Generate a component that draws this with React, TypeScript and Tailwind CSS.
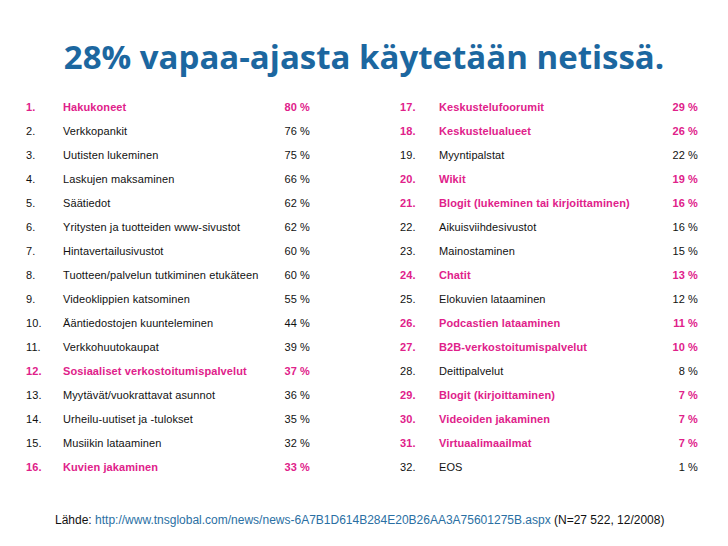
import React from 'react';

type Row = { n: string; label: string; pct: string; hi?: boolean };

const left: Row[] = [
  { n: '1.', label: 'Hakukoneet', pct: '80 %', hi: true },
  { n: '2.', label: 'Verkkopankit', pct: '76 %' },
  { n: '3.', label: 'Uutisten lukeminen', pct: '75 %' },
  { n: '4.', label: 'Laskujen maksaminen', pct: '66 %' },
  { n: '5.', label: 'Säätiedot', pct: '62 %' },
  { n: '6.', label: 'Yritysten ja tuotteiden www-sivustot', pct: '62 %' },
  { n: '7.', label: 'Hintavertailusivustot', pct: '60 %' },
  { n: '8.', label: 'Tuotteen/palvelun tutkiminen etukäteen', pct: '60 %' },
  { n: '9.', label: 'Videoklippien katsominen', pct: '55 %' },
  { n: '10.', label: 'Ääntiedostojen kuunteleminen', pct: '44 %' },
  { n: '11.', label: 'Verkkohuutokaupat', pct: '39 %' },
  { n: '12.', label: 'Sosiaaliset verkostoitumispalvelut', pct: '37 %', hi: true },
  { n: '13.', label: 'Myytävät/vuokrattavat asunnot', pct: '36 %' },
  { n: '14.', label: 'Urheilu-uutiset ja -tulokset', pct: '35 %' },
  { n: '15.', label: 'Musiikin lataaminen', pct: '32 %' },
  { n: '16.', label: 'Kuvien jakaminen', pct: '33 %', hi: true },
];

const right: Row[] = [
  { n: '17.', label: 'Keskustelufoorumit', pct: '29 %', hi: true },
  { n: '18.', label: 'Keskustelualueet', pct: '26 %', hi: true },
  { n: '19.', label: 'Myyntipalstat', pct: '22 %' },
  { n: '20.', label: 'Wikit', pct: '19 %', hi: true },
  { n: '21.', label: 'Blogit (lukeminen tai kirjoittaminen)', pct: '16 %', hi: true },
  { n: '22.', label: 'Aikuisviihdesivustot', pct: '16 %' },
  { n: '23.', label: 'Mainostaminen', pct: '15 %' },
  { n: '24.', label: 'Chatit', pct: '13 %', hi: true },
  { n: '25.', label: 'Elokuvien lataaminen', pct: '12 %' },
  { n: '26.', label: 'Podcastien lataaminen', pct: '11 %', hi: true },
  { n: '27.', label: 'B2B-verkostoitumispalvelut', pct: '10 %', hi: true },
  { n: '28.', label: 'Deittipalvelut', pct: '8 %' },
  { n: '29.', label: 'Blogit (kirjoittaminen)', pct: '7 %', hi: true },
  { n: '30.', label: 'Videoiden jakaminen', pct: '7 %', hi: true },
  { n: '31.', label: 'Virtuaalimaailmat', pct: '7 %', hi: true },
  { n: '32.', label: 'EOS', pct: '1 %' },
];

function List({ rows, numW }: { rows: Row[]; numW: string }) {
  return (
    <div className="flex flex-col">
      {rows.map((r) => (
        <div
          key={r.n}
          className={`flex h-[24px] items-center text-[11px] tracking-[0.1px] ${r.hi ? 'font-bold text-[#e0218a]' : 'text-[#111]'}`}
        >
          <span className={numW}>{r.n}</span>
          <span className="flex-1">{r.label}</span>
          <span className="text-right">{r.pct}</span>
        </div>
      ))}
    </div>
  );
}

export default function App() {
  return (
    <div className="w-[728px] h-[546px] bg-white font-['Liberation_Sans',Arial,sans-serif] overflow-hidden">
      <h1 className="pt-[35px] text-center font-['Open_Sans',sans-serif] text-[33px] font-bold leading-[44px] text-[#1c67a0]">
        28% vapaa-ajasta käytetään netissä.
      </h1>
      <div className="mt-[16px] grid grid-cols-[284px_298px] gap-x-[90px] pl-[26px]">
        <List rows={left} numW="w-[37px]" />
        <List rows={right} numW="w-[39px]" />
      </div>
      <p className="mt-[32px] pl-[55px] text-[12px] text-[#111]">
        Lähde:{' '}
        <span className="text-[#2a6fa3]">
          http://www.tnsglobal.com/news/news-6A7B1D614B284E20B26AA3A75601275B.aspx
        </span>{' '}
        (N=27 522, 12/2008)
      </p>
    </div>
  );
}
